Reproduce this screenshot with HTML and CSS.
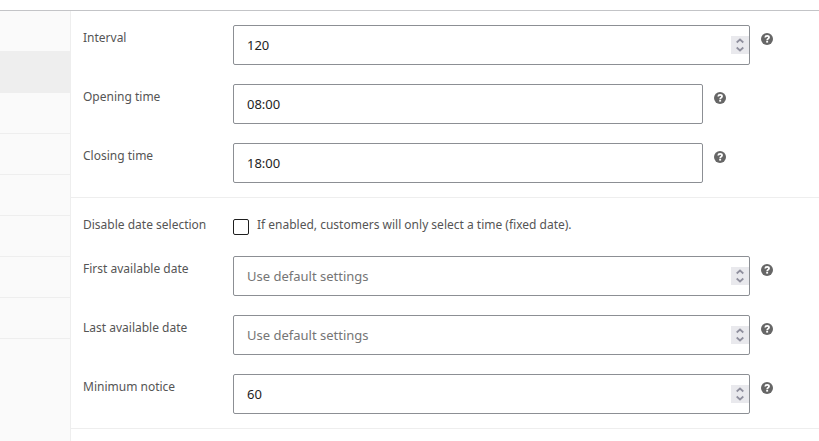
FILE: index.html
```
<!DOCTYPE html>
<html lang="en">
<head>
  <meta charset="UTF-8">
  <meta name="viewport" content="width=device-width, initial-scale=1.0">
  <title>Product data</title>
  <link rel="stylesheet" href="styles.css">
</head>
<body>
  <!-- Help icon and number arrows, shared by all rows -->
  <svg class="sprite" aria-hidden="true">
    <symbol id="help" viewBox="0 0 12 12">
      <circle cx="6" cy="6" r="6" fill="#666"/>
      <path d="M4.200 4.500C4.300 3.300 5 2.900 6.100 2.900c1.200 0 1.900.6 1.900 1.500C8 5.700 6.200 5.600 6.200 7.200" fill="none" stroke="#fff" stroke-width="1.800"/>
      <rect x="5.200" y="7.900" width="1.900" height="1.700" fill="#fff"/>
    </symbol>
    <symbol id="spin" viewBox="0 0 18 18">
      <path d="M5.700 6.500L9 3.500l3.300 3M5.700 11.500l3.300 3 3.300-3" fill="none" stroke="#8f8f9d" stroke-width="1.700"/>
    </symbol>
  </svg>

  <div class="panel-header"></div>
  <div class="panel">
    <ul class="tabs">
      <li></li>
      <li class="active"></li>
      <li></li>
      <li></li>
      <li></li>
      <li></li>
      <li></li>
      <li></li>
    </ul>

    <form class="options">
      <!-- Time -->
      <div class="options-group">
        <div class="field">
          <label for="interval">Interval</label>
          <div class="control">
            <div class="number">
              <input type="number" id="interval" value="120">
              <svg class="spin" aria-hidden="true"><use href="#spin"/></svg>
            </div>
            <svg class="help" role="img" aria-label="Help"><use href="#help"/></svg>
          </div>
        </div>
        <div class="field">
          <label for="opening">Opening time</label>
          <div class="control">
            <input type="text" class="short" id="opening" value="08:00">
            <svg class="help" role="img" aria-label="Help"><use href="#help"/></svg>
          </div>
        </div>
        <div class="field">
          <label for="closing">Closing time</label>
          <div class="control">
            <input type="text" class="short" id="closing" value="18:00">
            <svg class="help" role="img" aria-label="Help"><use href="#help"/></svg>
          </div>
        </div>
      </div>

      <!-- Date -->
      <div class="options-group">
        <div class="field field-checkbox">
          <label for="disable-date">Disable date selection</label>
          <div class="control">
            <input type="checkbox" id="disable-date" aria-describedby="disable-date-hint">
            <span class="description" id="disable-date-hint">If enabled, customers will only select a time (fixed date).</span>
          </div>
        </div>
        <div class="field">
          <label for="first-date">First available date</label>
          <div class="control">
            <div class="number">
              <input type="number" id="first-date" placeholder="Use default settings">
              <svg class="spin" aria-hidden="true"><use href="#spin"/></svg>
            </div>
            <svg class="help" role="img" aria-label="Help"><use href="#help"/></svg>
          </div>
        </div>
        <div class="field">
          <label for="last-date">Last available date</label>
          <div class="control">
            <div class="number">
              <input type="number" id="last-date" placeholder="Use default settings">
              <svg class="spin" aria-hidden="true"><use href="#spin"/></svg>
            </div>
            <svg class="help" role="img" aria-label="Help"><use href="#help"/></svg>
          </div>
        </div>
        <div class="field">
          <label for="notice">Minimum notice</label>
          <div class="control">
            <div class="number">
              <input type="number" id="notice" value="60">
              <svg class="spin" aria-hidden="true"><use href="#spin"/></svg>
            </div>
            <svg class="help" role="img" aria-label="Help"><use href="#help"/></svg>
          </div>
        </div>
      </div>
    </form>
  </div>
</body>
</html>
```
FILE: styles.css
```
* {
  box-sizing: border-box;
}
body {
  margin: 0;
  min-height: 100vh;
  display: flex;
  flex-direction: column;
  background: #fff;
  color: #555;
  font-family: "Segoe UI", "Noto Sans", sans-serif;
  font-size: 12px;
}
.sprite {
  display: none;
}
.panel-header {
  height: 11px;
  border-bottom: 1px solid #c3c4c7;
}
.panel {
  flex: 1;
  display: flex;
}

/* Tabs */
.tabs {
  width: 71px;
  margin: 0;
  padding: 0;
  list-style: none;
  background: #fafafa;
  border-right: 1px solid #eee;
}
.tabs li {
  height: 41px;
  border-bottom: 1px solid #eee;
}
.tabs .active {
  background: #eee;
}

/* Options */
.options {
  flex: 1;
}
.options-group {
  display: flex;
  flex-direction: column;
  gap: 19px;
  padding: 14px 0 14px 12px;
  border-bottom: 1px solid #eee;
}
.field {
  display: flex;
  line-height: 26px;
}
.field label {
  width: 150px;
}
.control {
  flex: 1;
  display: flex;
}
.number {
  position: relative;
  width: 88.2%;
}
.short {
  width: 80.2%;
}
input[type="text"],
input[type="number"] {
  height: 40px;
  padding: 0 13px;
  border: 1px solid #8c8f94;
  border-radius: 2px;
  background: #fff;
  color: #1e1e1e;
  font-family: inherit;
  font-size: 13px;
}
input[type="number"] {
  width: 100%;
  appearance: textfield;
}
input::placeholder {
  color: #757575;
}
.spin {
  position: absolute;
  top: 11px;
  right: 1px;
  width: 18px;
  height: 18px;
  background: #e9e9ed;
}
.help {
  width: 12px;
  height: 12px;
  margin: 8px 0 0 11px;
}

/* Checkbox row */
.field-checkbox {
  height: 25px;
}
input[type="checkbox"] {
  appearance: none;
  width: 16px;
  height: 16px;
  margin: 7px 8px 0 0;
  border: 1px solid #1e1e1e;
  border-radius: 2px;
}
```
